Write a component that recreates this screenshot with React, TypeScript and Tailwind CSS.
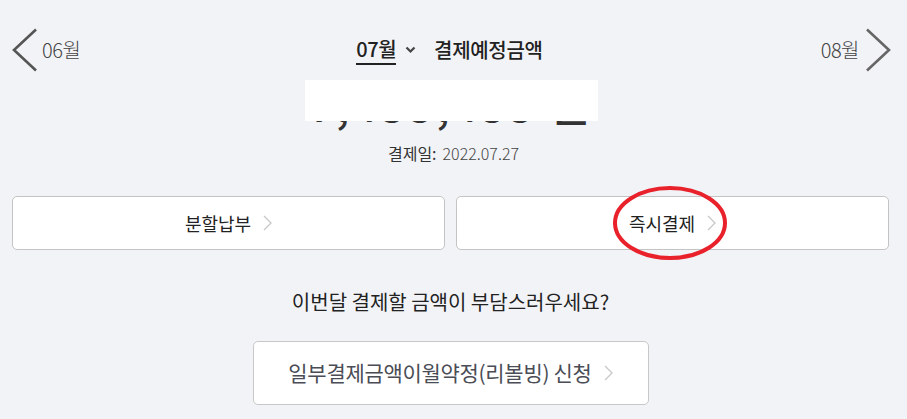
import React from 'react';

const font = { fontFamily: '"Noto Sans CJK KR", "Noto Sans", sans-serif' };

function SmallChevron() {
  return (
    <svg width="9" height="16" viewBox="0 0 9 16" className="ml-[12px]">
      <path d="M1 1 L8 8 L1 15" fill="none" stroke="#c8c8c8" strokeWidth="1.3" />
    </svg>
  );
}

export default function App() {
  return (
    <div
      className="relative w-[907px] h-[419px] overflow-hidden bg-[#f2f3f7] text-[#222]"
      style={font}
    >
      {/* month navigation */}
      <div className="grid grid-cols-[1fr_auto_1fr] items-center pl-[12px] pr-[16px] pt-[28px] h-[72px]">
        <div className="flex items-center">
          <svg width="26" height="44" viewBox="0 0 26 44">
            <path d="M24 1.5 L2 22 L24 42.5" fill="none" stroke="#555" strokeWidth="2.6" />
          </svg>
          <span className="ml-[4px] text-[20px] font-light text-[#444] tracking-[-0.5px]">06월</span>
        </div>
        <div className="flex items-center mr-[4px]">
          <span className="text-[20px] font-medium text-[#222] border-b-2 border-[#222] leading-[26px] pb-[1px] tracking-[-0.5px]">
            07월
          </span>
          <svg width="11" height="8" viewBox="0 0 11 8" className="ml-[9px]">
            <path d="M1.5 1.5 L5.5 5.5 L9.5 1.5" fill="none" stroke="#444" strokeWidth="2.2" />
          </svg>
          <span className="ml-[18px] text-[20px] font-medium text-[#222] tracking-[-0.3px]">결제예정금액</span>
        </div>
        <div className="flex items-center justify-end">
          <span className="mr-[6px] text-[20px] font-light text-[#444] tracking-[-0.5px]">08월</span>
          <svg width="26" height="44" viewBox="0 0 26 44">
            <path d="M2 1.5 L24 22 L2 42.5" fill="none" stroke="#666" strokeWidth="2.6" />
          </svg>
        </div>
      </div>

      {/* amount, partly hidden */}
      <div className="relative flex justify-center h-[58px] pt-[4px] pr-[6px]">
        <span className="text-[44px] leading-[54px] font-medium text-[#333] tracking-[3px]">7,455,455 원</span>
        <div className="absolute left-[305px] top-[8px] w-[293px] h-[41px] bg-white" />
      </div>

      <div className="flex justify-center items-center mt-[13px] text-[16px] leading-[21px]">
        <span className="font-normal text-[#333]">결제일:</span>
        <span className="ml-[6px] font-light text-[#444]">2022.07.27</span>
      </div>

      {/* buttons */}
      <div className="flex gap-[11px] pl-[12px] pr-[18px] mt-[32px]">
        <div className="flex flex-1 h-[54px] items-center justify-center rounded-[5px] border border-[#c4c4c4] bg-white">
          <span className="text-[18px] text-[#222]">분할납부</span>
          <SmallChevron />
        </div>
        <div className="relative flex flex-1 h-[54px] items-center justify-center rounded-[5px] border border-[#c4c4c4] bg-white">
          <span className="text-[18px] text-[#222]">즉시결제</span>
          <SmallChevron />
        </div>
      </div>

      <div className="flex justify-center mt-[37px] pl-[12px] pr-[18px] text-[20px] leading-[30px] text-[#222]">
        이번달 결제할 금액이 부담스러우세요?
      </div>

      <div className="flex justify-center mt-[24px] pl-[12px] pr-[18px]">
        <div className="flex w-[396px] h-[64px] items-center justify-center rounded-[5px] border border-[#c8c8c8] bg-white">
          <span className="text-[21px] text-[#4a4d55] tracking-[-0.3px]">일부결제금액이월약정(리볼빙) 신청</span>
          <SmallChevron />
        </div>
      </div>

      {/* red annotation circle */}
      <svg width="120" height="80" viewBox="0 0 120 80" className="absolute left-[610px] top-[183px]">
        <ellipse cx="60" cy="40" rx="55" ry="35" fill="none" stroke="#e8212b" strokeWidth="4" />
      </svg>
    </div>
  );
}
